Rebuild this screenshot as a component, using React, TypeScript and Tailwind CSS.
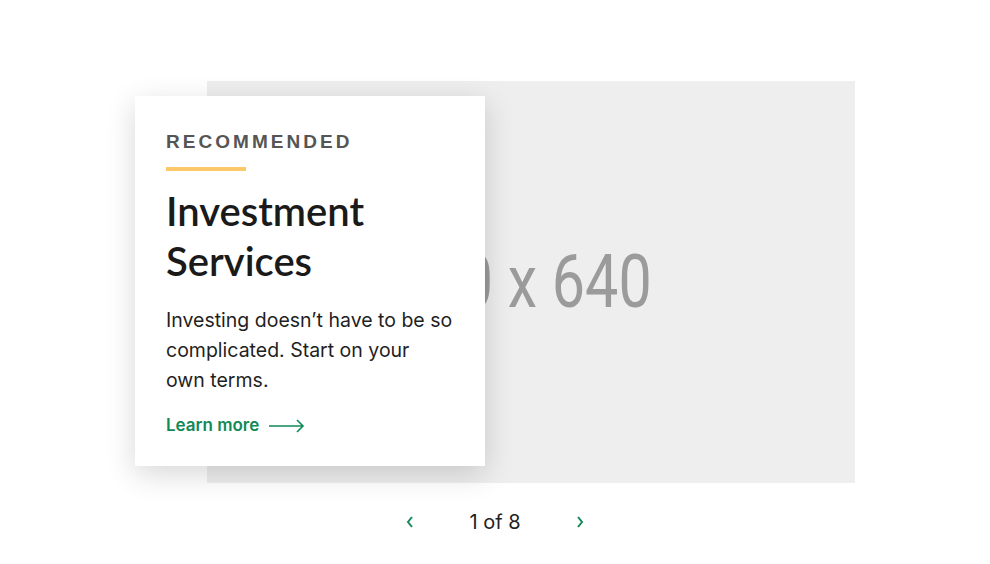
import React from "react";

export default function App() {
  return (
    <div className="min-h-[564px] w-full bg-white" style={{ fontFamily: "Inter, 'Noto Sans', sans-serif" }}>
      <div className="mx-auto w-[720px] pt-[81px]">
        <div className="grid grid-cols-[72px_648px]">
          <div className="col-start-2 row-start-1 flex h-[402px] items-center justify-center overflow-hidden bg-[#eeeeee] pr-[17px]">
            <span className="scale-x-[0.8] text-[74px] leading-none text-[#9b9b9b]" style={{ fontFamily: "Roboto, sans-serif" }}>
              960 x 640
            </span>
          </div>
          <div className="relative z-10 col-span-2 col-start-1 row-start-1 mt-[15px] h-[370px] w-[350px] self-start bg-white px-[31px] pt-[33px] shadow-[0_8px_28px_rgba(0,0,0,0.16)]">
            <div className="text-[19px] font-bold uppercase leading-[26px] tracking-[0.16em] text-[#555555]" style={{ fontFamily: "'Liberation Sans', Arial, sans-serif" }}>
              Recommended
            </div>
            <div className="mt-[12px] h-[4px] w-[80px] bg-[#fdc86a]" />
            <h2 className="mt-[15px] text-[40px] font-semibold leading-[50px] text-[#1a1a1a]" style={{ fontFamily: "Lato, sans-serif" }}>
              Investment Services
            </h2>
            <p className="mt-[19px] text-[19.5px] leading-[30px] text-[#1f1f1f]">
              Investing doesn’t have to be so complicated. Start on your
              <br />
              own terms.
            </p>
            <a className="mt-[18px] flex items-center gap-[10px] text-[17px] font-semibold text-[#118a57]" href="#">
              Learn more
              <svg width="36" height="14" viewBox="0 0 36 14" fill="none" stroke="currentColor" strokeWidth="1.6">
                <path d="M0 7h34M28 1l6 6-6 6" />
              </svg>
            </a>
          </div>
        </div>
        <div className="mt-[24px] flex items-center justify-center gap-[54px]">
          <button className="text-[#118a57]">
            <svg width="10" height="14" viewBox="0 0 10 14" fill="none" stroke="currentColor" strokeWidth="2">
              <path d="M7 2L3 7l4 5" />
            </svg>
          </button>
          <span className="text-[20px] text-[#222222]">1 of 8</span>
          <button className="text-[#118a57]">
            <svg width="10" height="14" viewBox="0 0 10 14" fill="none" stroke="currentColor" strokeWidth="2">
              <path d="M3 2l4 5-4 5" />
            </svg>
          </button>
        </div>
      </div>
    </div>
  );
}
